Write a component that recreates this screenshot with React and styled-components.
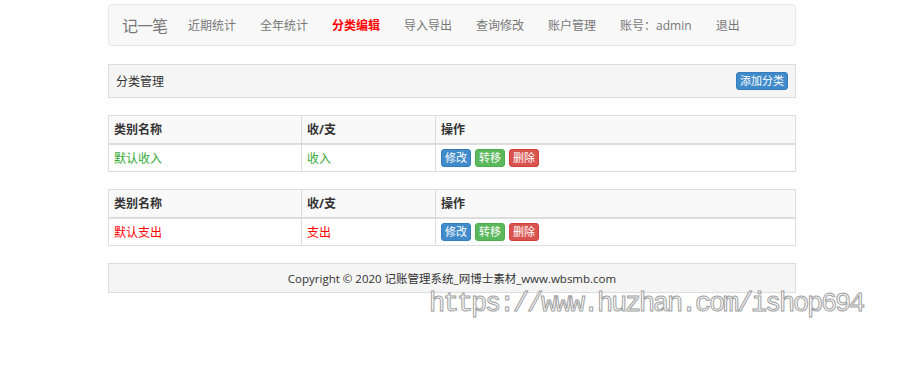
import styled, { createGlobalStyle } from 'styled-components';

const GlobalStyle = createGlobalStyle`
  html, body {
    margin: 0;
    padding: 0;
    background: #fff;
  }
  body {
    font-family: "Open Sans", "Noto Sans CJK SC", sans-serif;
    font-size: 12px;
    color: #333;
  }
`;

const Page = styled.div`
  position: relative;
  width: 900px;
  height: 375px;
  padding: 4px 104px 0 108px;
  box-sizing: border-box;
  display: flex;
  flex-direction: column;
  gap: 17px;
`;

const Navbar = styled.nav`
  display: flex;
  align-items: center;
  height: 42px;
  box-sizing: border-box;
  background: #f8f8f8;
  border: 1px solid #e7e7e7;
  border-radius: 4px;
  padding-left: 13px;
  margin-bottom: 1px;
`;

const Brand = styled.span`
  font-size: 16px;
  color: #777;
  margin-right: 9px;
  letter-spacing: -1px;
`;

const NavItem = styled.a`
  padding: 0 12px;
  font-size: 12px;
  color: ${(p) => (p.$active ? '#ff0000' : '#777')};
  font-weight: ${(p) => (p.$active ? 'bold' : 'normal')};
  text-decoration: none;
  white-space: nowrap;
`;

const Panel = styled.div`
  display: flex;
  align-items: center;
  justify-content: space-between;
  height: 34px;
  box-sizing: border-box;
  background: #f5f5f5;
  border: 1px solid #ddd;
  padding: 0 7px 0 7px;
`;

const Title = styled.span`
  font-size: 12px;
  color: #333;
`;

const Btn = styled.button`
  border: 1px solid ${(p) => p.$border};
  background: ${(p) => p.$bg};
  color: #fff;
  font-family: inherit;
  font-size: 11px;
  line-height: 16px;
  height: 18px;
  padding: 0 3px;
  border-radius: 3px;
  cursor: pointer;
`;

const Table = styled.table`
  width: 100%;
  border-collapse: collapse;
  border: 1px solid #ddd;
  th, td {
    border: 1px solid #ddd;
    text-align: left;
    padding: 0 5px;
    height: 28px;
    box-sizing: border-box;
  }
  th {
    background: #f9f9f9;
    font-weight: bold;
    border-bottom-width: 2px;
  }
`;

const Cell = styled.td`
  color: ${(p) => p.$color};
`;

const Actions = styled.div`
  display: flex;
  gap: 4px;
`;

const Footer = styled.div`
  height: 30px;
  box-sizing: border-box;
  background: #f5f5f5;
  border: 1px solid #ddd;
  display: flex;
  align-items: center;
  justify-content: center;
  font-size: 11.5px;
  color: #333;
`;

const Watermark = styled.div`
  position: absolute;
  left: 429px;
  top: 289px;
  font-family: "Liberation Mono", monospace;
  font-size: 27px;
  letter-spacing: -2.2px;
  color: #fff;
  -webkit-text-stroke: 1px #a0a0a0;
  white-space: nowrap;
`;

const navItems = ['近期统计', '全年统计', '分类编辑', '导入导出', '查询修改', '账户管理', '账号：admin', '退出'];

const categories = [
  { name: '默认收入', type: '收入', color: '#33aa33' },
  { name: '默认支出', type: '支出', color: '#ff0000' },
];

const App = () => {
  return (
    <>
      <GlobalStyle />
      <Page>
        <Navbar>
          <Brand>记一笔</Brand>
          {navItems.map((item) => (
            <NavItem key={item} $active={item === '分类编辑'}>
              {item}
            </NavItem>
          ))}
        </Navbar>
        <Panel>
          <Title>分类管理</Title>
          <Btn $bg="#428bca" $border="#357ebd">添加分类</Btn>
        </Panel>
        {categories.map((c) => (
          <Table key={c.name}>
            <thead>
              <tr>
                <th style={{ width: 193 }}>类别名称</th>
                <th style={{ width: 134 }}>收/支</th>
                <th>操作</th>
              </tr>
            </thead>
            <tbody>
              <tr>
                <Cell $color={c.color}>{c.name}</Cell>
                <Cell $color={c.color}>{c.type}</Cell>
                <td>
                  <Actions>
                    <Btn $bg="#428bca" $border="#357ebd">修改</Btn>
                    <Btn $bg="#5cb85c" $border="#4cae4c">转移</Btn>
                    <Btn $bg="#d9534f" $border="#d43f3a">删除</Btn>
                  </Actions>
                </td>
              </tr>
            </tbody>
          </Table>
        ))}
        <Footer>Copyright © 2020 记账管理系统_网博士素材_www.wbsmb.com</Footer>
        <Watermark>https://www.huzhan.com/ishop694</Watermark>
      </Page>
    </>
  );
};

export default App;
